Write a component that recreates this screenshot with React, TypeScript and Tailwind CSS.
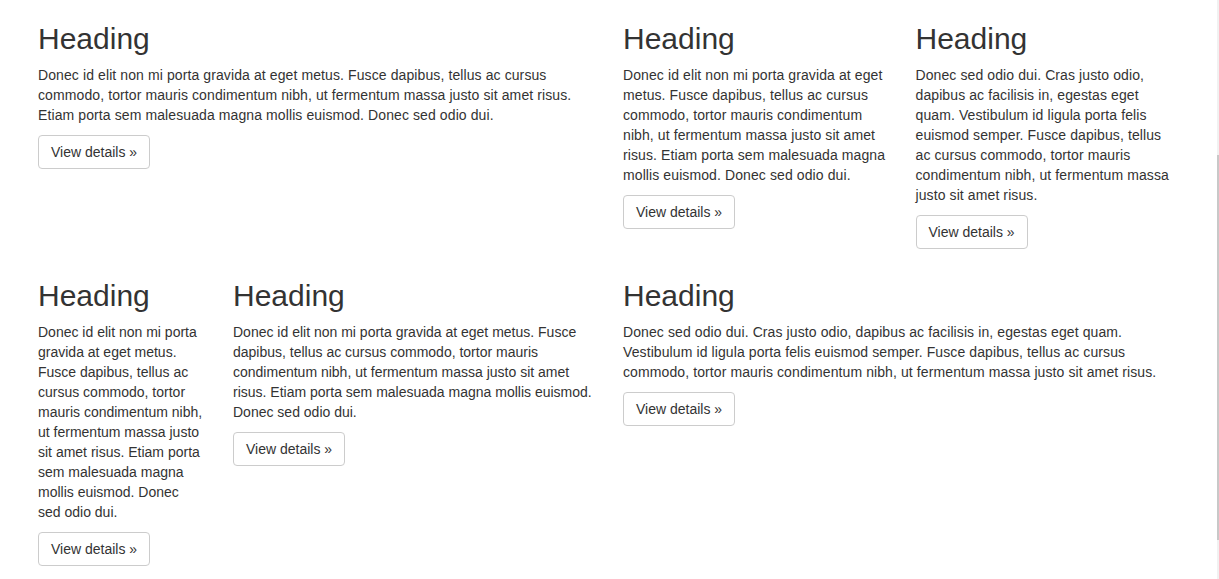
const TEXT_A =
  'Donec id elit non mi porta gravida at eget metus. Fusce dapibus, tellus ac cursus commodo, tortor mauris condimentum nibh, ut fermentum massa justo sit amet risus. Etiam porta sem malesuada magna mollis euismod. Donec sed odio dui.';
const TEXT_B =
  'Donec sed odio dui. Cras justo odio, dapibus ac facilisis in, egestas eget quam. Vestibulum id ligula porta felis euismod semper. Fusce dapibus, tellus ac cursus commodo, tortor mauris condimentum nibh, ut fermentum massa justo sit amet risus.';

function Block({ text, first, tight }: { text: string; first?: boolean; tight?: boolean }) {
  return (
    <div>
      <h2 className={`${first ? 'mt-[22px]' : 'mt-[20px]'} mb-[10px] text-[30px] leading-[33px] font-normal`}>Heading</h2>
      <p className={`mb-[10px] ${tight ? 'tracking-normal' : 'tracking-[0.1px]'}`}>{text}</p>
      <p className="mb-[10px]">
        <a
          href="#"
          className="inline-block h-[34px] rounded-[4px] border border-[#ccc] bg-white px-3 py-[6px] align-middle leading-5 text-[#333]"
        >
          View details »
        </a>
      </p>
    </div>
  );
}

export default function App() {
  return (
    <div className="relative min-h-[579px] bg-white font-['Liberation_Sans',Arial,sans-serif] text-[14px] leading-5 text-[#333]">
      <div className="ml-[23px] w-[1170px] px-[15px]">
        {/* row 1 */}
        <div className="-mx-[15px] flex">
          <div className="w-1/2 px-[15px]">
            <Block text={TEXT_A} first />
          </div>
          <div className="w-1/2 px-[15px]">
            <div className="-mx-[15px] flex">
              <div className="w-1/2 px-[15px]">
                <Block text={TEXT_A} first />
              </div>
              <div className="w-1/2 px-[15px]">
                <Block text={TEXT_B} first />
              </div>
            </div>
          </div>
        </div>

        {/* row 2 */}
        <div className="-mx-[15px] flex">
          <div className="w-1/2 px-[15px]">
            <div className="-mx-[15px] flex">
              <div className="w-1/3 px-[15px]">
                <Block text={TEXT_A} tight />
              </div>
              <div className="w-2/3 px-[15px]">
                <Block text={TEXT_A} tight />
              </div>
            </div>
          </div>
          <div className="w-1/2 px-[15px]">
            <Block text={TEXT_B} />
          </div>
        </div>
      </div>

      {/* thin scrollbar at the right edge */}
      <div className="fixed top-0 right-0 h-[579px] w-[2px] bg-[#f1f1f1]">
        <div className="mt-[155px] h-[385px] w-[2px] bg-[#c8c8c8]" />
      </div>
    </div>
  );
}
